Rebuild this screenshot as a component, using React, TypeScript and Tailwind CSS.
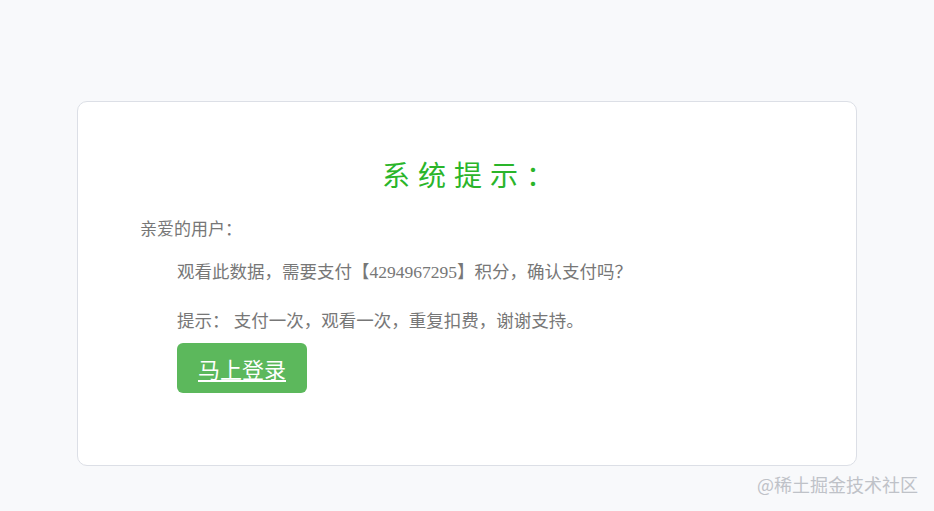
export default function App() {
  return (
    <div className="relative w-[934px] h-[511px] bg-[#f8f9fb] pt-[101px] pl-[77px] font-['Liberation_Serif','Noto_Sans_CJK_SC',serif]">
      <div className="w-[780px] h-[365px] bg-white border border-[#dcdfe6] rounded-[10px] pt-[52px] pl-[62px]">
        <h1 className="text-center pr-[52px] text-[28px] leading-[40px] tracking-[8px] text-[#2ab52a] font-['Noto_Sans_CJK_SC',sans-serif]">
          系统提示：
        </h1>
        <p className="mt-[24px] text-[17px] leading-[24px] text-[#777]">亲爱的用户：</p>
        <div className="pl-[37px]">
          <p className="mt-[18px] text-[17.5px] leading-[24px] text-[#777]">
            观看此数据，需要支付【4294967295】积分，确认支付吗？
          </p>
          <p className="mt-[25px] text-[17.5px] leading-[24px] text-[#777]">
            提示： 支付一次，观看一次，重复扣费，谢谢支持。
          </p>
          <a
            href="#"
            className="mt-[10px] inline-flex items-center justify-center w-[130px] h-[50px] rounded-[6px] bg-[#5cb85c] text-white text-[22px] underline font-['Noto_Sans_CJK_SC',sans-serif]"
          >
            马上登录
          </a>
        </div>
      </div>
      <span className="absolute right-[16px] bottom-[16px] text-[18px] leading-[22px] text-[#bfc2c8] font-['Noto_Sans_CJK_SC',sans-serif]">
        @稀土掘金技术社区
      </span>
    </div>
  );
}
